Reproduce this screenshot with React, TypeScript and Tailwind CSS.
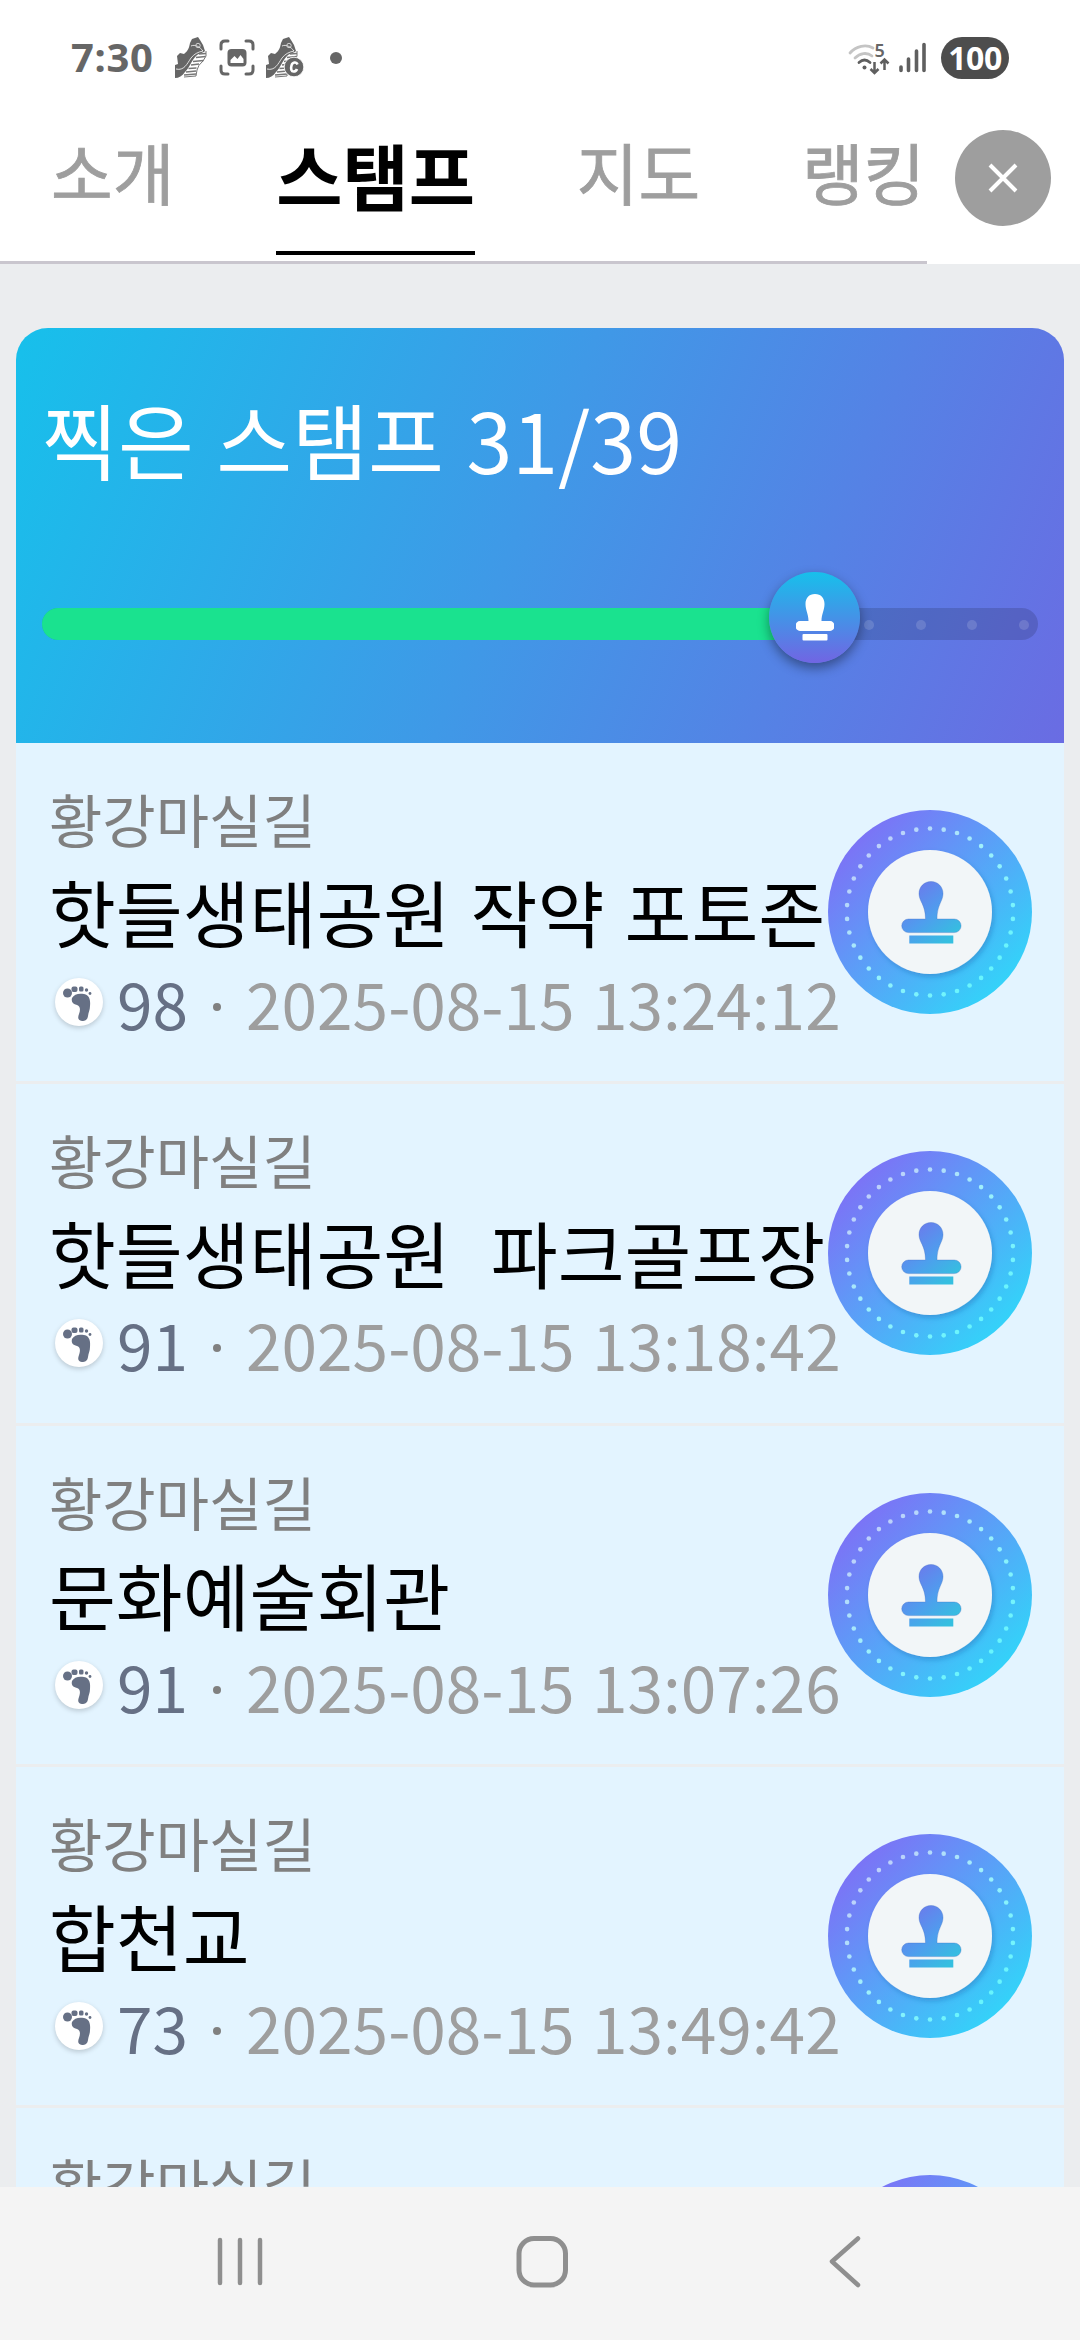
interface StampRecord {
  id: number;
  course: string;
  name?: string;
  steps?: number;
  date?: string;
}

const tabs = [
  { label: "소개", active: false },
  { label: "스탬프", active: true },
  { label: "지도", active: false },
  { label: "랭킹", active: false },
];

const records: StampRecord[] = [
  { id: 1, course: "황강마실길", name: "핫들생태공원 작약 포토존", steps: 98, date: "2025-08-15 13:24:12" },
  { id: 2, course: "황강마실길", name: "핫들생태공원  파크골프장", steps: 91, date: "2025-08-15 13:18:42" },
  { id: 3, course: "황강마실길", name: "문화예술회관", steps: 91, date: "2025-08-15 13:07:26" },
  { id: 4, course: "황강마실길", name: "합천교", steps: 73, date: "2025-08-15 13:49:42" },
  { id: 5, course: "황강마실길" },
];

function Shoe({ badge = false }: { badge?: boolean }) {
  return (
    <svg className="h-[42px] w-[40px]" viewBox="0 0 40 42" fill="none">
      {/* Sole */}
      <path d="M32 14q1.500 5-3 10-5 4-6 9l-1 6-12 1" stroke="#777" strokeWidth="1" />
      <path
        d="M25 17l7-.5M22 20.500l9.500-1M19 24.500l10.500-1M17 28l8-1M14.500 31.500l8-.5M12 35l10-1M10 38l12-1"
        stroke="#777"
        strokeWidth="1.400"
      />
      {/* Upper */}
      <path
        d="M1 28l3-1-1-8 3-3 4 1c4-3 5-6 6-11l2-4 6-2 2 3 3 5 2 6c-2 2-6 2-9 5-5 5-6 11-11 16-3 4-6 6-10 6z"
        fill="#666"
      />
      <path d="M17 9c4-2 9 1 12 5M2 32c8 2 11-5 15-11 3-4 7-6 12-7" stroke="#fff" strokeWidth="0.800" />
      <circle cx="24" cy="8.500" r="2.200" stroke="#ddd" strokeWidth="0.900" />
      {badge && (
        <>
          <circle cx="29" cy="30" r="9.800" fill="#666" stroke="#fff" strokeWidth="0.800" />
          <path d="M32.500 27.500c-1-3-5-2.500-6 1s0 6 2 6 3-1 3.500-2.500" stroke="#fff" strokeWidth="2.600" />
        </>
      )}
    </svg>
  );
}

function StatusBar() {
  return (
    <div className="flex h-[116px] items-start justify-between pl-[71px] pr-[71px] pt-[37px]">
      <div className="flex h-[42px] items-center">
        <span className="mb-[2px] w-[103px] whitespace-nowrap font-['Noto_Sans'] text-[40px] font-bold leading-none tracking-[0.7px] text-[#666]">
          7:30
        </span>
        <Shoe />
        <svg className="ml-[5px] h-[38px] w-[36px]" viewBox="0 0 36 38" fill="none">
          <path
            d="M2 10V6q0-4 4-4h3M27 2h3q4 0 4 4v4M34 27v4q0 4-4 4h-3M9 35H6q-4 0-4-4v-4"
            stroke="#666"
            strokeWidth="3"
            strokeLinecap="round"
          />
          <rect x="8.500" y="10" width="19" height="17.500" rx="4" fill="#666" />
          <path d="M11.500 24v-3l4-4 3 3 3-4 3 4v4z" fill="#fff" />
        </svg>
        <div className="ml-[10px]">
          <Shoe badge />
        </div>
        <span className="ml-[25px] h-3 w-3 rounded-full bg-[#666]" />
      </div>

      <div className="flex h-[42px] items-center">
        <svg className="h-[32px] w-[42px] overflow-visible" viewBox="0 0 42 32" fill="none">
          <g strokeWidth="2.800" strokeLinecap="round">
            <path d="M2 11C8 4 18 2 25 6" stroke="#c4c4c4" />
            <path d="M7 16c5-5 12-6 17-2" stroke="#c4c4c4" />
            <path d="M11 20.500q5.500-5 11 0" stroke="#5f5f5f" />
          </g>
          <circle cx="16.500" cy="25.500" r="2" fill="#5f5f5f" />
          <path d="M26.500 20v10M22.500 27l4 4 4-4M36.500 28V18M32.500 21.500l4-4 4 4" stroke="#5f5f5f" strokeWidth="2.500" />
          <text x="26.500" y="15" fill="#666" fontFamily="Noto Sans" fontSize="18" fontWeight="600">
            5
          </text>
        </svg>
        <svg className="ml-[8px] h-[32px] w-[30px]" viewBox="0 0 30 32">
          <g stroke="#5f5f5f" strokeWidth="3.600" strokeLinecap="round">
            <path d="M3 25v3.500M10.500 17v11.500M18.500 9v19.500M26 2.500v26" />
          </g>
        </svg>
        <div className="ml-[13px] flex h-[42px] w-[68px] items-center justify-center rounded-full bg-[#4d4d4d] font-['Noto_Sans'] text-[32px] font-bold leading-none tracking-[-0.5px] text-white">
          100
        </div>
      </div>
    </div>
  );
}

function TabBar() {
  return (
    <div className="flex h-[148px]">
      <div className="flex w-[927px] shrink-0 gap-[101.900px] border-b-[3px] border-[#c9c6ce] pl-[51px]">
        {tabs.map((tab) => (
          <button
            key={tab.label}
            className={
              tab.active
                ? "mb-[6px] flex shrink-0 items-start border-b-[4px] border-black text-[72px] font-bold leading-[115px] text-black"
                : "flex shrink-0 items-start text-[67px] leading-[110px] text-[#9e9e9e] [-webkit-text-stroke:0.8px_#9e9e9e]"
            }
          >
            {tab.label}
          </button>
        ))}
      </div>
      <button className="ml-[28px] mt-[14px] flex h-[96px] w-[96px] items-center justify-center rounded-full bg-[#9e9e9e]">
        <svg className="h-[30px] w-[30px]" viewBox="0 0 30 30">
          <path d="M2 2l26 26M28 2L2 28" stroke="#fff" strokeWidth="4" />
        </svg>
      </button>
    </div>
  );
}

function ProgressCard() {
  return (
    <div className="h-[415px] rounded-t-[32px] bg-[linear-gradient(112deg,#17c0eb_0%,#3f99e7_48%,#6a6ce3_100%)] px-[26px] pt-[50px]">
      <h1 className="text-[82.500px] leading-[120px] text-white [word-spacing:4px]">찍은 스탬프 31/39</h1>
      <div className="relative mt-[110px] flex h-[32px] items-center rounded-full bg-black/14">
        <div className="h-full w-[773px] rounded-l-full bg-[#1ae28f]" />
        <div className="flex gap-[41.500px] pl-[49px] pt-[2px]">
          {[36, 37, 38, 39].map((n) => (
            <span key={n} className="h-[10px] w-[10px] rounded-full bg-white/14" />
          ))}
        </div>
        {/* Knob */}
        <div className="absolute left-[727px] top-[-36px] flex h-[91px] w-[91px] items-center justify-center rounded-full bg-[linear-gradient(180deg,#17c0eb,#7165e3)] shadow-[0_5px_12px_rgba(0,0,0,0.4)]">
          <svg className="mb-[2px] h-[48px] w-[38px]" viewBox="0 0 38 48" fill="#fff">
            <path d="M19 1c6 0 9.500 4 9.500 10 0 6-3 10-3 17H34a4.500 5 0 010 10H4a4.500 5 0 010-10h8.500c0-7-3-11-3-17C9.500 5 13 1 19 1z" />
            <rect x="6.500" y="41" width="25" height="6.500" rx="1" />
          </svg>
        </div>
      </div>
    </div>
  );
}

const ringDots = Array.from({ length: 38 }, (_, i) => {
  const a = (i / 38) * Math.PI * 2;
  return { x: 102 + Math.sin(a) * 83.2, y: 102 - Math.cos(a) * 83.5 };
});

function StampBadge() {
  return (
    <svg className="h-[204px] w-[204px] shrink-0" viewBox="0 0 204 204">
      <defs>
        <linearGradient id="ring" gradientUnits="userSpaceOnUse" x1="30" y1="30" x2="174" y2="174">
          <stop offset="0" stopColor="#7b74f6" />
          <stop offset="1" stopColor="#34d2f9" />
        </linearGradient>
        <linearGradient id="dots" gradientUnits="userSpaceOnUse" x1="30" y1="30" x2="174" y2="174">
          <stop offset="0" stopColor="#c4c8fb" />
          <stop offset="0.450" stopColor="#a0f0fb" />
          <stop offset="1" stopColor="#5cf6fd" />
        </linearGradient>
        <linearGradient id="glyph" gradientUnits="userSpaceOnUse" x1="88" y1="76" x2="128" y2="124">
          <stop offset="0" stopColor="#6a7cec" />
          <stop offset="0.500" stopColor="#4f9dee" />
          <stop offset="1" stopColor="#35bfe0" />
        </linearGradient>
        <filter id="soft" x="-20%" y="-20%" width="140%" height="140%">
          <feDropShadow dx="2" dy="3" stdDeviation="2.500" floodColor="#1f5fa8" floodOpacity="0.35" />
        </filter>
      </defs>
      <circle cx="102" cy="102" r="102" fill="url(#ring)" />
      <g fill="url(#dots)">
        {ringDots.map((dot, i) => (
          <circle key={i} cx={dot.x} cy={dot.y} r="2.300" />
        ))}
      </g>
      <circle cx="102" cy="102" r="62" fill="#f2f6f8" filter="url(#soft)" />
      <g fill="url(#glyph)">
        <path
          d="M103 71.500c7 0 12 5.500 12 12 0 8-6 11-6 25.500h17.300a6.800 6.800 0 010 13.600H80.500a6.800 6.800 0 010-13.600H97.500c0-14.500-6.500-17.500-6.500-25.500 0-6.500 5-12 12-12z"
          stroke="#3f6fc4"
          strokeOpacity="0.35"
          strokeWidth="1"
        />
        <rect x="81.300" y="125.500" width="44" height="8" />
      </g>
    </svg>
  );
}

function FootIcon() {
  return (
    <div className="flex h-12 w-12 shrink-0 items-center justify-center rounded-full bg-white shadow-[0_2px_5px_rgba(0,0,0,0.18)]">
      <svg className="mr-[5px] mt-[2px] h-[36px] w-[30px]" viewBox="0 0 30 36" fill="#667085">
        <circle cx="5.500" cy="8" r="4.500" />
        <rect x="9.500" y="1.500" width="6" height="5.500" rx="2" />
        <rect x="17" y="1.500" width="4.500" height="5" rx="1.500" />
        <circle cx="24.500" cy="5" r="1.700" />
        <circle cx="28" cy="8.500" r="1.400" />
        <path d="M10 13c2-4 7-5 12-4 6 1 6.500 7 6 12 0 4-1.500 6-2 10-.5 4-3 5-6 5-4-.5-4.500-3-3-7 1.500-4 1.500-8-2-9-4-1-6-3-5-7z" />
      </svg>
    </div>
  );
}

function RecordRow({ record }: { record: StampRecord }) {
  return (
    <li className="flex h-[341.330px] shrink-0 items-center justify-between border-b-[3px] border-[#ebedef] pl-[33px] pr-[32px]">
      <div className="h-[274px] w-[778px] shrink-0 whitespace-pre">
        <div className="text-[58px] leading-[86px] text-[#808080]">{record.course}</div>
        <div className="h-[100px] text-[72.700px] leading-[100px] text-black [word-spacing:4px]">{record.name}</div>
        {record.date && (
          <div className="flex h-[88px] text-[64px] leading-[83px] text-[#9e9e9e] [word-spacing:3px]">
            <div className="ml-[6px] mr-[14px] mt-[17px]">
              <FootIcon />
            </div>
            <span className="text-[#667085]">{record.steps}</span>
            <span className="mx-[25px] mt-[42px] h-2 w-2 shrink-0 rounded-full bg-[#808080]" />
            <span>{record.date}</span>
          </div>
        )}
      </div>
      <StampBadge />
    </li>
  );
}

function NavigationBar() {
  return (
    <nav className="flex h-[153px] shrink-0 items-center justify-between bg-[#f4f4f4] pb-[3px] pl-[212px] pr-[212px]">
      <svg className="h-14 w-14" viewBox="0 0 56 56" stroke="#8f8f8f" strokeWidth="4.500" strokeLinecap="round">
        <path d="M8 6v43M28 6v43M48 6v43" />
      </svg>
      <svg className="ml-1 h-14 w-14" viewBox="0 0 56 56" fill="none" stroke="#8f8f8f" strokeWidth="5">
        <rect x="5" y="4.500" width="46.500" height="46.500" rx="15" />
      </svg>
      <svg className="h-14 w-14" viewBox="0 0 56 56" fill="none" stroke="#8f8f8f" strokeWidth="4.500" strokeLinecap="round" strokeLinejoin="round">
        <path d="M46 4.500L20 27.500L46 51" />
      </svg>
    </nav>
  );
}

export default function App() {
  return (
    <div className="flex h-[2340px] w-[1080px] flex-col overflow-hidden bg-[#ebedef] font-['Noto_Sans_CJK_KR',sans-serif]">
      <header className="shrink-0 bg-white">
        <StatusBar />
        <TabBar />
      </header>

      <main className="min-h-0 flex-1 overflow-hidden px-4 pt-[64px]">
        <ProgressCard />
        <ul className="bg-[#e3f4ff]">
          {records.map((record) => (
            <RecordRow key={record.id} record={record} />
          ))}
        </ul>
      </main>

      <NavigationBar />
    </div>
  );
}
